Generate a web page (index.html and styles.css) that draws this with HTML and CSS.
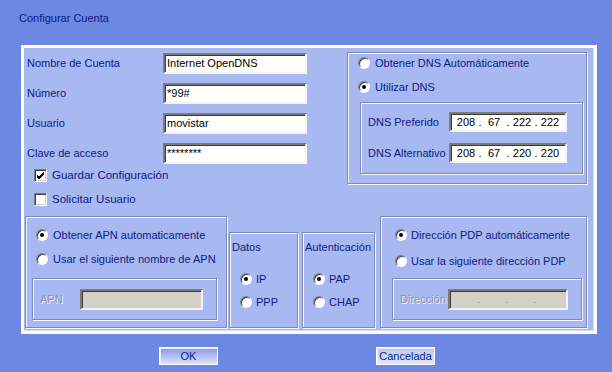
FILE: index.html
```html
<!DOCTYPE html>
<html lang="es">
<head>
<meta charset="utf-8">
<title>Configurar Cuenta</title>
<link rel="stylesheet" href="styles.css">
</head>
<body>
<div class="title">Configurar Cuenta</div>
<div class="panel">
  <div class="top">
    <div class="form">
      <div class="row"><span class="lbl">Nombre de Cuenta</span><span class="input">Internet OpenDNS</span></div>
      <div class="row"><span class="lbl">Número</span><span class="input">*99#</span></div>
      <div class="row"><span class="lbl">Usuario</span><span class="input">movistar</span></div>
      <div class="row"><span class="lbl">Clave de acceso</span><span class="input">********</span></div>
      <div class="checks">
        <div class="crow"><span class="check"><svg width="9" height="9" viewBox="0 0 9 9"><path d="M1 4 L3 6 L8 1 M1 5 L3 7 L8 2 M1 6 L3 8 L8 3" stroke="#000" stroke-width="1" fill="none"/></svg></span>Guardar Configuración</div>
        <div class="crow"><span class="check"></span>Solicitar Usuario</div>
      </div>
    </div>
    <div class="group dns">
      <div class="radios">
        <div class="rrow"><span class="radio"></span>Obtener DNS Automáticamente</div>
        <div class="rrow"><span class="radio on"></span>Utilizar DNS</div>
      </div>
      <div class="group inner dnsbox">
        <div class="drow"><span class="dlbl">DNS Preferido</span><span class="input ip"><span class="seg">208</span><span class="dot">.</span><span class="seg">67</span><span class="dot">.</span><span class="seg">222</span><span class="dot">.</span><span class="seg">222</span></span></div>
        <div class="drow"><span class="dlbl">DNS Alternativo</span><span class="input ip"><span class="seg">208</span><span class="dot">.</span><span class="seg">67</span><span class="dot">.</span><span class="seg">220</span><span class="dot">.</span><span class="seg">220</span></span></div>
      </div>
    </div>
  </div>
  <div class="bottom">
    <div class="group apn">
      <div class="radios">
        <div class="rrow"><span class="radio on"></span>Obtener APN automaticamente</div>
        <div class="rrow"><span class="radio"></span>Usar el siguiente nombre de APN</div>
      </div>
      <div class="group inner subbox apnbox">
        <span class="dis apnlbl">APN</span><span class="input disabled apninput"></span>
      </div>
    </div>
    <div class="group small datos">
      <div class="head">Datos</div>
      <div class="radios sm">
        <div class="rrow"><span class="radio on"></span>IP</div>
        <div class="rrow"><span class="radio"></span>PPP</div>
      </div>
    </div>
    <div class="group small auth">
      <div class="head">Autenticación</div>
      <div class="radios sm">
        <div class="rrow"><span class="radio on"></span>PAP</div>
        <div class="rrow"><span class="radio"></span>CHAP</div>
      </div>
    </div>
    <div class="group pdp">
      <div class="radios pdpr">
        <div class="rrow"><span class="radio on"></span>Dirección PDP automáticamente</div>
        <div class="rrow"><span class="radio"></span>Usar la siguiente dirección PDP</div>
      </div>
      <div class="group inner subbox pdpbox">
        <span class="dis pdplbl">Dirección</span><span class="input disabled ip pdpinput"><span class="seg"></span><span class="dot">.</span><span class="seg"></span><span class="dot">.</span><span class="seg"></span><span class="dot">.</span><span class="seg"></span></span>
      </div>
    </div>
  </div>
</div>
<div class="buttons">
  <span class="btn ok">OK</span>
  <span class="btn cancel">Cancelada</span>
</div>
</body>
</html>
```
FILE: styles.css
```css
html, body {
  margin: 0;
  padding: 0;
}
body {
  width: 612px;
  height: 372px;
  overflow: hidden;
  background: #6c88e2;
  font-family: "Liberation Sans", Arial, sans-serif;
  font-size: 11px;
  color: #0c1a86;
}
.title {
  padding: 12px 0 0 19px;
  height: 14px;
  line-height: 13px;
}
.panel {
  margin: 19px 0 0 21px;
  width: 576px;
  height: 289px;
  box-sizing: border-box;
  background: #a8b8f0;
  border: 3px solid #fff;
  box-shadow: inset -1px -1px 0 #d8def6;
}
.top {
  display: flex;
  height: 163px;
}
.form {
  width: 286px;
  padding-left: 3px;
  box-sizing: border-box;
}
.row {
  display: flex;
  align-items: center;
  height: 30px;
}
.lbl {
  width: 136px;
}
.input {
  display: flex;
  align-items: center;
  box-sizing: border-box;
  width: 144px;
  height: 21px;
  background: #fffffb;
  border: 2px solid;
  border-color: #7c7c7c #f4f4f4 #f4f4f4 #7c7c7c;
  box-shadow: inset 1px 1px 0 #3a3a3a;
  padding-left: 2px;
  color: #000;
  font-size: 11px;
}
.checks {
  margin-top: -5px;
  padding-left: 7px;
}
.crow {
  display: flex;
  align-items: center;
  height: 24px;
  font-size: 11.5px;
}
.check {
  display: flex;
  align-items: center;
  justify-content: center;
  box-sizing: border-box;
  width: 13px;
  height: 13px;
  margin-right: 5px;
  background: #fff;
  border: 1px solid;
  border-color: #7a7a7a #fff #fff #7a7a7a;
  box-shadow: inset 1px 1px 0 #404040, inset -1px -1px 0 #d4d0c8;
}
.group {
  box-sizing: border-box;
  border: 1px solid #7f8ab2;
  box-shadow: inset 1px 1px 0 #f4f6ff, 1px 1px 0 #f4f6ff;
}
.dns {
  margin: 4px 0 0 37px;
  width: 240px;
  height: 132px;
}
.radios {
  display: flex;
  flex-direction: column;
  gap: 4px;
  padding-left: 10px;
}
.rrow {
  display: flex;
  align-items: center;
  height: 20px;
}
.radio {
  position: relative;
  box-sizing: border-box;
  width: 12px;
  height: 12px;
  margin-right: 5px;
  border-radius: 50%;
  background: radial-gradient(circle at 60% 60%, #fff 40%, #e4e4e4 100%);
  border: 1px solid;
  border-color: #808080 #ffffff #ffffff #808080;
  box-shadow: inset 1px 1px 0 #404040;
}
.radio.on::after {
  content: "";
  position: absolute;
  left: 3px;
  top: 3px;
  width: 4px;
  height: 4px;
  border-radius: 50%;
  background: #000;
}
.dnsbox {
  margin: 5px 0 0 12px;
  width: 223px;
  height: 72px;
  padding-top: 3px;
}
.drow {
  display: flex;
  align-items: center;
  height: 31px;
  padding-left: 7px;
}
.dlbl {
  width: 81px;
}
.ip {
  width: 118px;
  height: 20px;
  padding-left: 4px;
  color: #000;
}
.seg {
  width: 22px;
  text-align: center;
}
.dot {
  width: 6px;
  text-align: center;
}
.bottom {
  display: flex;
  align-items: flex-end;
  margin-top: 5px;
}
.apn {
  margin-left: 1px;
  width: 202px;
  height: 112px;
  padding-top: 8px;
}
.subbox {
  display: flex;
  align-items: center;
  height: 42px;
  padding-left: 7px;
}
.apnbox {
  margin: 9px 0 0 6px;
  width: 185px;
}
.dis {
  color: #8a94b4;
  text-shadow: 1px 1px 0 #eef1ff;
}
.apnlbl {
  width: 40px;
}
.disabled {
  background: #d4d0c8;
}
.apninput {
  width: 123px;
}
.small {
  height: 96px;
  padding: 8px 0 0 2px;
}
.datos {
  margin-left: 2px;
  width: 69px;
}
.auth {
  margin-left: 4px;
  width: 73px;
}
.head {
  height: 13px;
  line-height: 13px;
}
.radios.sm {
  margin-top: 15px;
  gap: 3px;
  padding-left: 8px;
}
.sm .radio {
  margin-right: 4px;
}
.pdp {
  margin-left: 5px;
  width: 207px;
  height: 112px;
  padding-top: 8px;
}
.pdpr {
  padding-left: 14px;
  gap: 6px;
}
.pdpr .radio {
  margin-right: 4px;
}
.pdpbox {
  margin: 7px 0 0 11px;
  width: 190px;
}
.pdplbl {
  width: 48px;
}
.pdpinput {
  width: 120px;
  height: 21px;
  color: #9a9890;
}
.buttons {
  display: flex;
  margin-top: 13px;
}
.btn {
  display: flex;
  align-items: center;
  justify-content: center;
  box-sizing: border-box;
  width: 59px;
  height: 18px;
  border: 1px solid #fff;
  box-shadow: inset 1px 1px 0 #e8ecff;
}
.ok {
  margin-left: 159px;
  background: linear-gradient(#8299e6, #dde3fa);
}
.cancel {
  margin-left: 158px;
  background: linear-gradient(#b9c6f3, #e2e8fb);
}
```
